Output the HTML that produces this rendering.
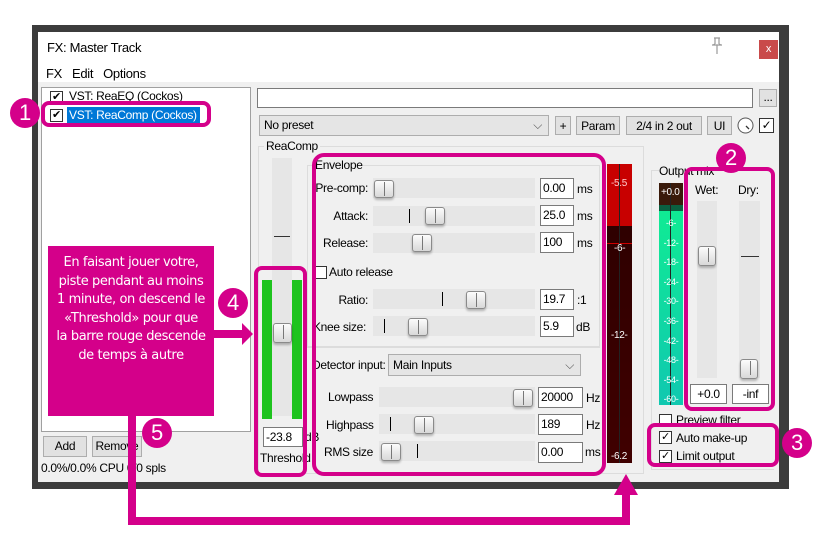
<!DOCTYPE html>
<html><head><meta charset="utf-8"><style>
*{margin:0;padding:0;box-sizing:border-box}
body{width:833px;height:551px;background:#fff;position:relative;overflow:hidden;font-family:"Liberation Sans",sans-serif;font-size:12px;color:#000;letter-spacing:-0.3px}
div,span{position:absolute}
.t{white-space:nowrap}
.btn{background:#e1e1e1;border:1px solid #adadad;text-align:center;line-height:18px}
.box{background:#fff;border:1px solid #7a7a7a;line-height:18px;padding-left:2px}
.trk{background:#e6e6e6;height:20px}
.th{width:20px;height:18px;border:1px solid #8a8a8a;border-radius:3px;background:linear-gradient(#fcfcfc,#d8d8d8);box-shadow:0 2px 2px rgba(0,0,0,.25)}
.th:after{content:"";position:absolute;left:9px;top:1px;width:1px;height:14px;background:#777}
.mk{width:1px;height:14px;background:#000}
.pk{border:4px solid #d4008a;border-radius:8px}
.cir{background:#d4008a;border-radius:50%;color:#fff;text-align:center;font-size:22px;width:30px;height:30px;line-height:30px}
.cb{width:13px;height:13px;border:1px solid #333;background:#fff;font-size:11px;line-height:11px;text-align:center}
.lbl{text-align:right}
</style></head><body>
<div style="left:32px;top:25px;width:757px;height:464px;background:#3c3c3c"></div>
<div style="left:38px;top:32px;width:741px;height:450px;background:#f0f0f0"></div>
<div style="left:38px;top:32px;width:741px;height:50px;background:#fff"></div>
<div class="t" style="left:47px;top:40px;font-size:13px">FX: Master Track</div>
<div class="t" style="left:46px;top:66px;font-size:13px">FX&nbsp;&nbsp;&nbsp;Edit&nbsp;&nbsp;&nbsp;Options</div>
<svg style="position:absolute;left:709px;top:37px" width="16" height="18" viewBox="0 0 16 18"><path d="M5 1h6M6 1v6M10 1v6M3 8h10M4 8l2-1M12 8l-2-1M8 8v9" stroke="#999" fill="none" stroke-width="1.2"/></svg>
<div style="left:759px;top:40px;width:19px;height:19px;background:#c94a4a;color:#fff;text-align:center;line-height:18px;font-size:11px">x</div>
<div style="left:41px;top:87px;width:210px;height:345px;background:#fff;border:1px solid #a0a0a0"></div>
<div class="cb" style="left:50px;top:91px">✔</div>
<div class="t" style="left:69px;top:89px">VST: ReaEQ (Cockos)</div>
<div class="cb" style="left:50px;top:109px">✔</div>
<div class="t" style="left:67px;top:107px;background:#0078d7;color:#fff;padding:1px 2px;width:133px">VST: ReaComp (Cockos)</div>
<div class="btn" style="left:43px;top:436px;width:44px;height:21px">Add</div>
<div class="btn" style="left:92px;top:436px;width:50px;height:21px">Remove</div>
<div class="t" style="left:41px;top:461px">0.0%/0.0% CPU 0/0 spls</div>
<div style="left:257px;top:88px;width:496px;height:20px;background:#fff;border:1px solid #7a7a7a"></div>
<div class="btn" style="left:759px;top:89px;width:18px;height:18px;line-height:14px">...</div>
<div style="left:259px;top:115px;width:290px;height:21px;background:#e5e5e5;border:1px solid #adadad;line-height:19px;padding-left:4px">No preset<span style="right:6px;top:0;color:#555">⌵</span></div>
<div class="btn" style="left:555px;top:116px;width:16px;height:19px">+</div>
<div class="btn" style="left:576px;top:116px;width:44px;height:19px">Param</div>
<div class="btn" style="left:626px;top:116px;width:76px;height:19px">2/4 in 2 out</div>
<div class="btn" style="left:707px;top:116px;width:25px;height:19px">UI</div>
<svg style="position:absolute;left:737px;top:117px" width="17" height="17" viewBox="0 0 17 17"><circle cx="8.5" cy="8.5" r="7.5" fill="#fff" stroke="#555"/><path d="M9 9l3 3" stroke="#333" stroke-width="1.3"/></svg>
<div class="cb" style="left:759px;top:118px;width:15px;height:15px;font-size:12px;line-height:13px">✓</div>
<div style="left:258px;top:146px;width:386px;height:328px;border:1px solid #dcdcdc"></div>
<div class="t" style="left:264px;top:139px;background:#f0f0f0;padding:0 2px">ReaComp</div>
<div style="left:272px;top:158px;width:20px;height:258px;background:#e6e6e6"></div>
<div style="left:274px;top:236px;width:16px;height:1px;background:#333"></div>
<div style="left:262px;top:280px;width:10px;height:139px;background:#1ec31e"></div>
<div style="left:292px;top:280px;width:10px;height:139px;background:#1ec31e"></div>
<div class="th" style="left:273px;top:323px;width:19px;height:20px"></div>
<div class="box" style="left:263px;top:427px;width:40px;height:20px">-23.8</div>
<div class="t" style="left:305px;top:430px">dB</div>
<div class="t" style="left:260px;top:451px">Threshold</div>
<div style="left:307px;top:165px;width:293px;height:182px;border:1px solid #dcdcdc"></div>
<div class="t" style="left:315px;top:158px;background:#f0f0f0">Envelope</div>
<div style="left:307px;top:347px;width:293px;height:1px;background:#dcdcdc"></div>

<div class="t lbl" style="left:300px;top:181px;width:68px">Pre-comp:</div>
<div class="trk" style="left:373px;top:178px;width:162px"></div>
<div class="th" style="left:374px;top:180px"></div>
<div class="box" style="left:540px;top:178px;width:34px;height:21px">0.00</div><div class="t" style="left:577px;top:182px">ms</div>

<div class="t lbl" style="left:300px;top:209px;width:68px">Attack:</div>
<div class="trk" style="left:373px;top:206px;width:162px"></div><div class="mk" style="left:409px;top:209px"></div>
<div class="th" style="left:425px;top:207px"></div>
<div class="box" style="left:540px;top:205px;width:34px;height:21px">25.0</div><div class="t" style="left:577px;top:209px">ms</div>

<div class="t lbl" style="left:300px;top:236px;width:68px">Release:</div>
<div class="trk" style="left:373px;top:233px;width:162px"></div>
<div class="th" style="left:412px;top:234px"></div>
<div class="box" style="left:540px;top:232px;width:34px;height:21px">100</div><div class="t" style="left:577px;top:236px">ms</div>

<div class="cb" style="left:315px;top:266px;width:12px;height:13px"></div>
<div class="t" style="left:329px;top:265px">Auto release</div>

<div class="t lbl" style="left:300px;top:293px;width:68px">Ratio:</div>
<div class="trk" style="left:373px;top:289px;width:162px"></div><div class="mk" style="left:442px;top:292px"></div>
<div class="th" style="left:466px;top:291px"></div>
<div class="box" style="left:540px;top:289px;width:34px;height:21px">19.7</div><div class="t" style="left:577px;top:293px">:1</div>

<div class="t lbl" style="left:300px;top:320px;width:66px">Knee size:</div>
<div class="trk" style="left:373px;top:316px;width:162px"></div><div class="mk" style="left:384px;top:319px"></div>
<div class="th" style="left:408px;top:318px"></div>
<div class="box" style="left:540px;top:316px;width:34px;height:21px">5.9</div><div class="t" style="left:576px;top:320px">dB</div>

<div class="t" style="left:312px;top:358px">Detector input:</div>
<div style="left:388px;top:354px;width:193px;height:22px;background:#e5e5e5;border:1px solid #adadad;line-height:20px;padding-left:4px">Main Inputs<span style="right:6px;top:0;color:#555">⌵</span></div>

<div class="t" style="left:328px;top:390px">Lowpass</div>
<div class="trk" style="left:379px;top:387px;width:156px"></div>
<div class="th" style="left:513px;top:389px"></div>
<div class="box" style="left:538px;top:387px;width:45px;height:21px">20000</div><div class="t" style="left:586px;top:391px">Hz</div>

<div class="t" style="left:326px;top:418px">Highpass</div>
<div class="trk" style="left:379px;top:414px;width:156px"></div><div class="mk" style="left:390px;top:417px"></div>
<div class="th" style="left:414px;top:416px"></div>
<div class="box" style="left:538px;top:414px;width:45px;height:21px">189</div><div class="t" style="left:586px;top:418px">Hz</div>

<div class="t" style="left:324px;top:445px">RMS size</div>
<div class="trk" style="left:379px;top:441px;width:156px"></div><div class="mk" style="left:417px;top:444px"></div>
<div class="th" style="left:381px;top:443px"></div>
<div class="box" style="left:538px;top:442px;width:45px;height:21px">0.00</div><div class="t" style="left:585px;top:445px">ms</div>

<div style="left:607px;top:164px;width:25px;height:299px;background:linear-gradient(#2a0000,#400000)"></div>
<div style="left:607px;top:164px;width:25px;height:62px;background:#c80000"></div>
<div style="left:607px;top:243px;width:25px;height:1px;background:#c00"></div>
<div style="left:619px;top:164px;width:1px;height:299px;background:#222"></div>
<div class="t" style="left:611px;top:178px;color:#fcc;font-size:10px">-5.5</div>
<div class="t" style="left:614px;top:243px;color:#fff;font-size:10px">-6-</div>
<div class="t" style="left:611px;top:330px;color:#fff;font-size:10px">-12-</div>
<div class="t" style="left:611px;top:451px;color:#fff;font-size:10px">-6.2</div>
<div style="left:651px;top:170px;width:123px;height:300px;border:1px solid #dcdcdc;border-right:none"></div>
<div class="t" style="left:659px;top:164px;background:#f0f0f0">Output mix</div>
<div style="left:659px;top:183px;width:24px;height:222px;background:linear-gradient(#10f090,#10c8b0)"></div>
<div style="left:659px;top:183px;width:24px;height:22px;background:#3a1a0a"></div>
<div style="left:659px;top:205px;width:24px;height:6px;background:#0a6040"></div>
<div style="left:670px;top:183px;width:1px;height:222px;background:#222"></div>
<div class="t" style="left:661px;top:187px;color:#fff;font-size:10px">+0.0</div>
<div class="t" style="left:662px;top:214px;color:#fff;font-size:9px;line-height:19.6px;text-align:center;width:18px;white-space:pre">-6-
-12-
-18-
-24-
-30-
-36-
-42-
-48-
-54-
-60-</div>
<div class="t" style="left:695px;top:183px">Wet:</div>
<div class="t" style="left:738px;top:183px">Dry:</div>
<div style="left:697px;top:201px;width:20px;height:177px;background:#e6e6e6"></div>
<div style="left:739px;top:201px;width:21px;height:177px;background:#e6e6e6"></div>
<div style="left:741px;top:256px;width:18px;height:1px;background:#333"></div>
<div class="th" style="left:698px;top:246px;width:18px;height:20px"></div>
<div class="th" style="left:740px;top:359px;width:18px;height:20px"></div>
<div class="box" style="left:690px;top:384px;width:37px;height:20px;text-align:center;padding:0">+0.0</div>
<div class="box" style="left:732px;top:384px;width:37px;height:20px;text-align:center;padding:0">-inf</div>
<div class="cb" style="left:659px;top:414px"></div><div class="t" style="left:676px;top:413px">Preview filter</div>
<div class="cb" style="left:659px;top:431px">✓</div><div class="t" style="left:676px;top:431px">Auto make-up</div>
<div class="cb" style="left:659px;top:450px">✓</div><div class="t" style="left:676px;top:449px">Limit output</div>

<div class="pk" style="left:41px;top:101px;width:170px;height:26px"></div>
<div class="cir" style="left:10px;top:98px">1</div>
<div class="pk" style="left:684px;top:167px;width:91px;height:244px"></div>
<div class="cir" style="left:716px;top:143px">2</div>
<div class="pk" style="left:647px;top:423px;width:132px;height:44px"></div>
<div class="cir" style="left:782px;top:428px">3</div>
<div class="pk" style="left:254px;top:266px;width:53px;height:211px"></div>
<div class="pk" style="left:312px;top:153px;width:294px;height:323px;border-radius:12px"></div>
<div style="left:48px;top:246px;width:166px;height:170px;background:#d4008a;color:#fff;text-align:center;font-size:13px;line-height:18.5px;padding-top:8px;font-family:'DejaVu Sans',sans-serif;letter-spacing:-0.4px">En faisant jouer votre,<br>piste pendant au moins<br>1 minute, on descend le<br>«Threshold» pour que<br>la barre rouge descende<br>de temps à autre</div>
<div style="left:213px;top:330px;width:30px;height:8px;background:#d4008a"></div>
<div style="left:242px;top:323px;width:0;height:0;border-top:11px solid transparent;border-bottom:11px solid transparent;border-left:11px solid #d4008a"></div>
<div class="cir" style="left:218px;top:288px">4</div>
<div style="left:128px;top:416px;width:8px;height:109px;background:#d4008a"></div>
<div style="left:128px;top:517px;width:502px;height:8px;background:#d4008a"></div>
<div style="left:622px;top:494px;width:8px;height:31px;background:#d4008a"></div>
<div style="left:614px;top:474px;width:0;height:0;border-left:12px solid transparent;border-right:12px solid transparent;border-bottom:21px solid #d4008a"></div>
<div class="cir" style="left:142px;top:418px">5</div>
</body></html>
